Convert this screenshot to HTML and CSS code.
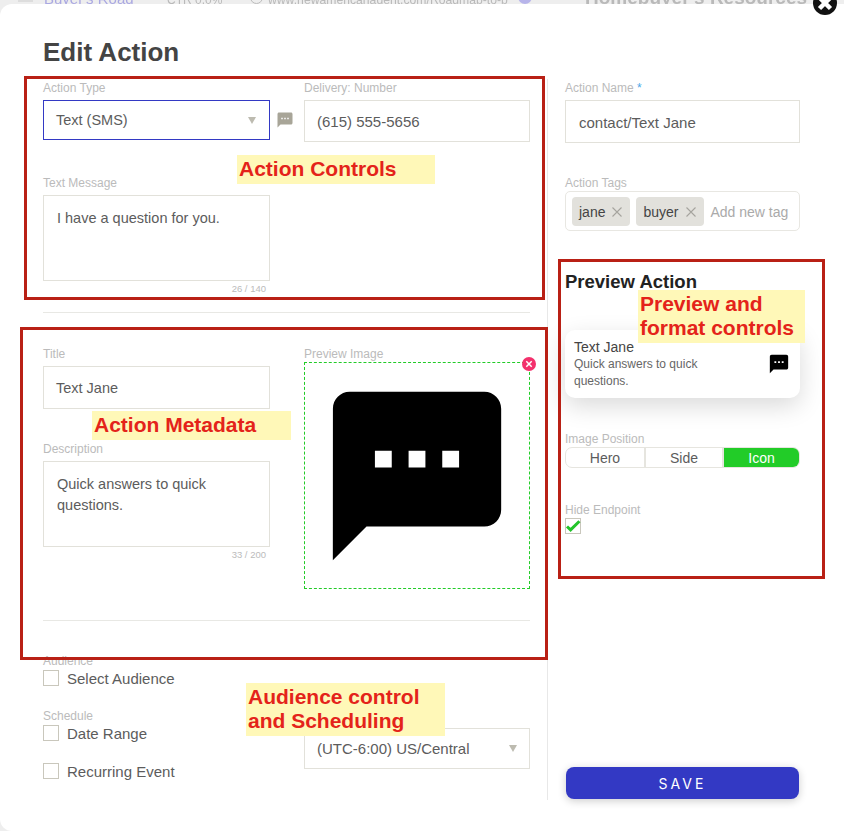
FILE: index.html
```html
<!DOCTYPE html>
<html>
<head>
  <meta charset="UTF-8">
  <title>Edit Action</title>
  <link rel="stylesheet" href="styles.css">
</head>
<body>
  <!-- page behind the modal, only its bottom edge peeks out -->
  <div class="behind">
    <span class="behind-thumb"></span>
    <span class="behind-name">Buyer's Road</span>
    <span class="behind-ctr">CTR 0.0%</span>
    <span class="behind-globe"></span>
    <span class="behind-link">www.newamericanagent.com/Roadmap-to-b</span>
    <span class="behind-dot"></span>
    <span class="behind-title">Homebuyer's Resources</span>
  </div>

  <div class="modal">
    <h1 class="modal-title">Edit Action</h1>

    <div class="layout">
      <div class="left-col">
        <div class="row-type">
          <div class="field">
            <div class="label">Action Type</div>
            <div class="select select-active"><span>Text (SMS)</span><i class="caret"></i></div>
          </div>
          <svg class="type-icon" viewBox="0 0 24 24"><path d="M20 2H4c-1.1 0-1.99.9-1.99 2L2 22l4-4h14c1.1 0 2-.9 2-2V4c0-1.1-.9-2-2-2zM9 11H7V9h2v2zm4 0h-2V9h2v2zm4 0h-2V9h2v2z"/></svg>
          <div class="field">
            <div class="label">Delivery: Number</div>
            <div class="input input-number">(615) 555-5656</div>
          </div>
        </div>

        <div class="field field-message">
          <div class="label">Text Message</div>
          <div class="textarea">I have a question for you.</div>
          <div class="counter">26 / 140</div>
        </div>

        <hr class="divider divider-first">

        <div class="row-meta">
          <div class="meta-fields">
            <div class="label">Title</div>
            <div class="input input-title">Text Jane</div>
            <div class="label label-desc">Description</div>
            <div class="textarea">Quick answers to quick questions.</div>
            <div class="counter">33 / 200</div>
          </div>
          <div class="meta-image">
            <div class="label label-tight">Preview Image</div>
            <div class="image-drop">
              <svg class="image-icon" viewBox="0 0 24 24"><path d="M20 2H4c-1.1 0-1.99.9-1.99 2L2 22l4-4h14c1.1 0 2-.9 2-2V4c0-1.1-.9-2-2-2zM9 11H7V9h2v2zm4 0h-2V9h2v2zm4 0h-2V9h2v2z"/></svg>
              <svg class="image-remove" viewBox="0 0 14 14">
                <circle cx="7" cy="7" r="7" fill="#f3306c"/>
                <path d="M4.3 4.3l5.4 5.4M9.7 4.3l-5.4 5.4" stroke="#fff" stroke-width="1.5"/>
              </svg>
            </div>
          </div>
        </div>

        <hr class="divider divider-second">

        <div class="row-audience">
          <div>
            <div class="label label-audience">Audience</div>
            <div class="check-row"><span class="check"></span>Select Audience</div>
            <div class="label label-schedule">Schedule</div>
            <div class="check-row"><span class="check"></span>Date Range</div>
            <div class="check-row check-row-last"><span class="check"></span>Recurring Event</div>
          </div>
          <div class="select select-zone"><span>(UTC-6:00) US/Central</span><i class="caret"></i></div>
        </div>
      </div>

      <div class="right-col">
        <div class="label">Action Name <em class="required">*</em></div>
        <div class="input input-name">contact/Text Jane</div>

        <div class="label label-tags">Action Tags</div>
        <div class="tags">
          <span class="tag">jane<svg viewBox="0 0 10 10"><path d="M.5.5l9 9M9.5.5l-9 9"/></svg></span>
          <span class="tag">buyer<svg viewBox="0 0 10 10"><path d="M.5.5l9 9M9.5.5l-9 9"/></svg></span>
          <span class="tag-input">Add new tag</span>
        </div>

        <h2 class="preview-title">Preview Action</h2>
        <div class="preview-card">
          <div class="preview-text">
            <div class="preview-name">Text Jane</div>
            <div class="preview-desc">Quick answers to quick questions.</div>
          </div>
          <svg class="preview-icon" viewBox="0 0 24 24"><path d="M20 2H4c-1.1 0-1.99.9-1.99 2L2 22l4-4h14c1.1 0 2-.9 2-2V4c0-1.1-.9-2-2-2zM9 11H7V9h2v2zm4 0h-2V9h2v2zm4 0h-2V9h2v2z"/></svg>
        </div>

        <div class="label label-position">Image Position</div>
        <div class="segments">
          <span class="segment">Hero</span>
          <span class="segment">Side</span>
          <span class="segment segment-on">Icon</span>
        </div>

        <div class="label label-hide">Hide Endpoint</div>
        <span class="check check-on">
          <svg viewBox="0 0 16 16"><path d="M2 8.5l3.6 3.4L14.4 3.2" fill="none" stroke="#22c42a" stroke-width="3"/></svg>
        </span>

        <button class="save-btn">SAVE</button>
      </div>
    </div>
  </div>

  <!-- close button -->
  <svg class="close" viewBox="0 0 24 24">
    <circle cx="12" cy="12" r="12" fill="#111"/>
    <path d="M6.5 6.5l11 11M17.5 6.5l-11 11" stroke="#fff" stroke-width="4.5"/>
  </svg>

  <!-- annotations drawn over the screen -->
  <div class="note-box note-box-controls"></div>
  <div class="note-box note-box-meta"></div>
  <div class="note-box note-box-preview"></div>
  <div class="note note-controls">Action Controls</div>
  <div class="note note-meta">Action Metadata</div>
  <div class="note note-preview">Preview and<br>format controls</div>
  <div class="note note-audience">Audience control<br>and Scheduling</div>
</body>
</html>
```

FILE: styles.css
```css
html, body {
  height: 100%;
}

body {
  margin: 0;
  position: relative;
  overflow: hidden;
  background: #eee;
  font-family: "Liberation Sans", Arial, sans-serif;
  color: #5c5c5c;
}

/* page behind */
.behind {
  display: flex;
  align-items: baseline;
  margin-top: -10px;
  padding-left: 18px;
  font-size: 12px;
  line-height: 16px;
  color: #b9b9b9;
  white-space: nowrap;
  filter: blur(0.4px);
}

.behind-thumb {
  align-self: flex-start;
  width: 15px;
  height: 12px;
  margin-right: 11px;
  background: #ddd;
}

.behind-name {
  width: 123px;
  font-size: 15px;
  color: #aaa8e2;
}

.behind-ctr {
  width: 83px;
}

.behind-globe {
  box-sizing: border-box;
  width: 13px;
  height: 13px;
  margin-right: 5px;
  border: 1px solid #bbb;
  border-radius: 50%;
}

.behind-link {
  width: 250px;
  font-size: 12.2px;
}

.behind-dot {
  width: 14px;
  height: 14px;
  margin-right: 53px;
  border-radius: 50%;
  background: #b7b4ea;
}

.behind-title {
  font-size: 19px;
  font-weight: bold;
}

/* modal */
.modal {
  position: absolute;
  top: 4px;
  left: 0;
  right: -20px;
  bottom: 0;
  box-sizing: border-box;
  padding: 33px 0 0 43px;
  background: #fff;
  border-radius: 12px;
}

.modal-title {
  margin: 0 0 12px;
  font-size: 26px;
  line-height: 30px;
  font-weight: bold;
  color: #444;
}

.layout {
  display: flex;
  height: 721px;
}

.left-col {
  width: 487px;
  padding-right: 17px;
  border-right: 1px solid #e8e8e8;
}

.right-col {
  display: flex;
  flex-direction: column;
  align-items: flex-start;
  width: 235px;
  padding: 0 0 1px 17px;
}

/* form bits */
.label {
  margin-bottom: 3px;
  font-size: 12px;
  line-height: 18px;
  color: #bbb;
}

.label-tight,
.label-tags,
.label-position,
.label-hide {
  margin-bottom: -1px;
}

.input,
.select,
.textarea {
  box-sizing: border-box;
  background: #fff;
  border: 1px solid #e2e1da;
  color: #5c5c5c;
}

.input {
  height: 43px;
  padding: 0 12px;
  font-size: 15px;
  line-height: 43px;
}

.input-number {
  height: 42px;
  line-height: 42px;
}

.input-title {
  font-size: 14.5px;
}

.input-name {
  width: 100%;
  padding-left: 13px;
}

.select {
  display: flex;
  justify-content: space-between;
  align-items: center;
  height: 41px;
  padding: 0 12px;
  font-size: 14.5px;
}

.select-active {
  height: 40px;
  padding-right: 13px;
  border-color: #3339c4;
}

.caret {
  width: 0;
  height: 0;
  border-left: 4px solid transparent;
  border-right: 4px solid transparent;
  border-top: 7px solid #bdbbb0;
}

.textarea {
  height: 86px;
  padding: 12px 13px;
  font-size: 14.5px;
  line-height: 21px;
}

.counter {
  margin-top: 2px;
  padding-right: 4px;
  font-size: 9.5px;
  line-height: 12px;
  text-align: right;
  color: #bbb;
}

.row-type {
  display: grid;
  grid-template-columns: 227px 34px 226px;
  align-items: start;
}

.type-icon {
  width: 18px;
  height: 18px;
  margin: 32px 0 0 6px;
  fill: #a8a598;
}

.field-message {
  width: 227px;
  margin-top: 32px;
}

.divider {
  height: 1px;
  margin: 0;
  border: 0;
  background: #e8e8e4;
}

.divider-first {
  margin-top: 17px;
}

.row-meta {
  display: grid;
  grid-template-columns: 227px 226px;
  column-gap: 34px;
  margin-top: 32px;
}

.label-desc {
  margin-top: 31px;
}

.image-drop {
  position: relative;
  display: flex;
  align-items: center;
  justify-content: center;
  box-sizing: border-box;
  height: 227px;
  border: 1px dashed #22cc28;
}

.image-icon {
  width: 202px;
  height: 202px;
  flex-shrink: 0;
}

.image-remove {
  position: absolute;
  top: -6px;
  right: -7px;
  width: 14px;
  height: 14px;
}

.divider-second {
  margin-top: 31px;
}

.row-audience {
  display: grid;
  grid-template-columns: 227px 226px;
  column-gap: 34px;
  margin-top: 31px;
}

.label-audience {
  margin-bottom: 0;
}

.check-row {
  display: flex;
  align-items: center;
  gap: 8px;
  height: 16px;
  font-size: 15px;
}

.check-row-last {
  margin-top: 22px;
}

.label-schedule {
  margin: 21px 0 0;
}

.check {
  display: block;
  box-sizing: border-box;
  width: 16px;
  height: 16px;
  border: 1px solid #c9c7bc;
  background: #fff;
  flex-shrink: 0;
}

.check-on svg {
  display: block;
  width: 16px;
  height: 16px;
  margin: -1px 0 0 -1px;
}

.select-zone {
  align-self: end;
  margin-bottom: 10px;
  font-size: 15px;
}

.required {
  font-style: normal;
  color: #4aa8e8;
}

.label-tags {
  margin-top: 31px;
}

.tags {
  display: flex;
  align-items: center;
  gap: 6px;
  box-sizing: border-box;
  width: 100%;
  height: 40px;
  padding: 0 6px;
  border: 1px solid #e8e7e2;
  border-radius: 5px;
  font-size: 14px;
  white-space: nowrap;
}

.tag {
  display: flex;
  align-items: center;
  gap: 7px;
  box-sizing: border-box;
  height: 29px;
  padding: 1px 8px 0 7px;
  border-radius: 4px;
  background: #e2e1dc;
  color: #444;
}

.tag svg {
  width: 10px;
  height: 10px;
  fill: none;
  stroke: #a5a49e;
  stroke-width: 1.1;
}

.tag-input {
  margin-left: 1px;
  padding-top: 1px;
  color: #aaa;
}

.preview-title {
  margin: 39px 0 36px;
  font-size: 18.5px;
  line-height: 24px;
  font-weight: bold;
  color: #222;
}

.preview-card {
  display: flex;
  align-items: center;
  justify-content: space-between;
  box-sizing: border-box;
  width: 235px;
  height: 68px;
  padding: 0 10px 0 9px;
  border-radius: 10px;
  background: #fff;
  box-shadow: 0 8px 24px rgba(0, 0, 0, 0.15);
}

.preview-name {
  font-size: 14px;
  line-height: 17px;
  color: #444;
}

.preview-desc {
  width: 140px;
  font-size: 12px;
  line-height: 17px;
  color: #666;
}

.preview-icon {
  width: 22px;
  height: 22px;
  flex-shrink: 0;
}

.label-position {
  margin-top: 32px;
}

.segments {
  display: grid;
  grid-template-columns: 80px 78px 1fr;
  box-sizing: border-box;
  width: 235px;
  height: 21px;
  border: 1px solid #e6e5df;
  border-radius: 7px;
  overflow: hidden;
  font-size: 14px;
  line-height: 20px;
}

.segment {
  text-align: center;
  border-right: 2px solid #e6e5df;
}

.segment-on {
  border-right: 0;
  background: #22cc28;
  color: #fff;
}

.label-hide {
  margin-top: 33px;
}

.save-btn {
  width: 233px;
  height: 32px;
  margin: auto 0 0 1px;
  border: 0;
  border-radius: 8px;
  background: #3339c4;
  box-shadow: 0 2px 8px rgba(0, 0, 0, 0.2);
  color: #fff;
  font-family: Inter, "Liberation Sans", sans-serif;
  font-size: 14px;
  letter-spacing: 3px;
}

.close {
  position: absolute;
  top: -9px;
  left: 813px;
  width: 24px;
  height: 24px;
}

/* annotations */
.note-box {
  position: absolute;
  box-sizing: border-box;
  border: 3px solid #b92015;
}

.note-box-controls {
  top: 76px;
  left: 24px;
  width: 521px;
  height: 224px;
}

.note-box-meta {
  top: 327px;
  left: 20px;
  width: 528px;
  height: 333px;
}

.note-box-preview {
  top: 259px;
  left: 558px;
  width: 267px;
  height: 320px;
}

.note {
  position: absolute;
  padding: 0 2px;
  background: #fff8b8;
  color: #e4231a;
  font-size: 21px;
  font-weight: bold;
  line-height: 24px;
  box-sizing: border-box;
}

.note-controls {
  top: 155px;
  left: 237px;
  width: 198px;
  height: 29px;
  line-height: 28px;
}

.note-meta {
  top: 411px;
  left: 92px;
  width: 199px;
  height: 29px;
  line-height: 28px;
}

.note-preview {
  top: 290px;
  left: 638px;
  width: 167px;
  height: 53px;
  padding-top: 2px;
}

.note-audience {
  top: 683px;
  left: 246px;
  width: 199px;
  height: 53px;
  padding-top: 2px;
}
```
